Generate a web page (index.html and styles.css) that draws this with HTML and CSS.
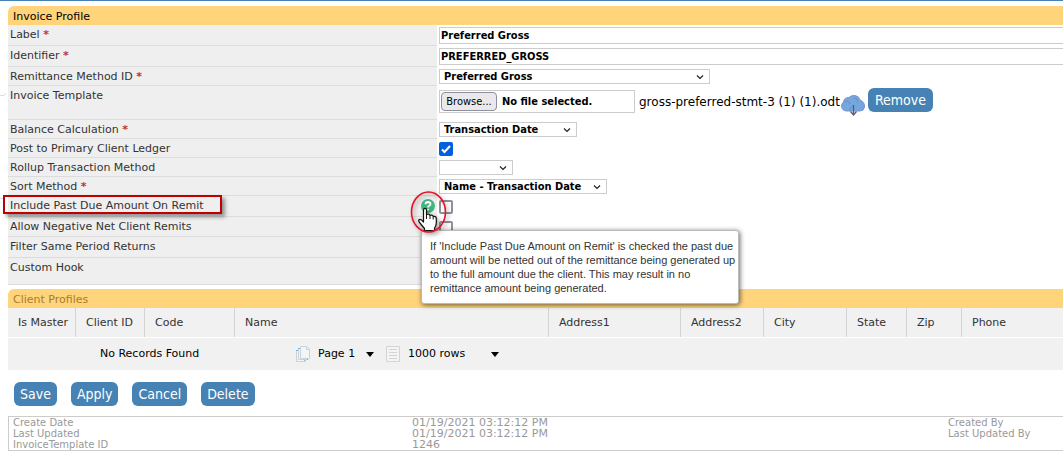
FILE: index.html
```html
<!DOCTYPE html>
<html lang="en">
<head>
<meta charset="utf-8">
<title>Invoice Profile</title>
<link rel="stylesheet" href="styles.css">
</head>
<body>
<div class="page">
  <div class="rail" aria-hidden="true">
    <svg class="rail-curve" width="8" height="6" viewBox="0 0 8 6"><path d="M0 3.5H3Q5 3.5 6 1" fill="none" stroke="#ddd"/></svg>
    <span class="rail-line"></span>
  </div>
  <main class="content">
    <form class="profile">
      <h2 class="bar">Invoice Profile</h2>
      <div class="row tall">
        <label class="name" for="label">Label <b class="req">*</b></label>
        <div class="field"><input class="text" id="label" type="text" value="Preferred Gross"></div>
      </div>
      <div class="row tall">
        <label class="name" for="ident">Identifier <b class="req">*</b></label>
        <div class="field"><input class="text" id="ident" type="text" value="PREFERRED_GROSS"></div>
      </div>
      <div class="row">
        <label class="name" for="remit">Remittance Method ID <b class="req">*</b></label>
        <div class="field"><select class="pick pick-wide" id="remit"><option>Preferred Gross</option></select></div>
      </div>
      <div class="row template">
        <label class="name" for="browse">Invoice Template</label>
        <div class="field files">
          <div class="file-box"><button class="browse" id="browse" type="button">Browse...</button><span>No file selected.</span></div>
          <span class="file-name">gross-preferred-stmt-3 (1) (1).odt</span>
          <svg class="cloud" width="24" height="21" viewBox="0 0 24 21"><path d="M5 16A5 5 0 0 1 2.500 7Q3 2.500 8 2.500Q10 0 14 .5Q18 1 19 5Q24 7 23.500 12Q23 16 19 16Z" fill="#76a7dc" stroke="#7f93cc"/><path d="M4 7Q8 5 9 9M13 3Q17 3 17 7M9 16Q8 13 12 11" fill="none" stroke="#668fcf"/><path d="M12.500 10V20M9.500 16.500L12.500 20L15.500 16.500" fill="none" stroke="#555b7c" stroke-width="1.300"/></svg>
          <button class="action" type="button">Remove</button>
        </div>
      </div>
      <div class="row">
        <label class="name" for="balance">Balance Calculation <b class="req">*</b></label>
        <div class="field"><select class="pick pick-date" id="balance"><option>Transaction Date</option></select></div>
      </div>
      <div class="row">
        <label class="name" for="post">Post to Primary Client Ledger</label>
        <div class="field"><input class="tick" id="post" type="checkbox" checked></div>
      </div>
      <div class="row">
        <label class="name" for="rollup">Rollup Transaction Method</label>
        <div class="field"><select class="pick pick-small" id="rollup"><option></option></select></div>
      </div>
      <div class="row">
        <label class="name" for="sort">Sort Method <b class="req">*</b></label>
        <div class="field"><select class="pick pick-sort" id="sort"><option>Name - Transaction Date</option></select></div>
      </div>
      <div class="row tall marked">
        <div class="name help-cell"><label for="past">Include Past Due Amount On Remit</label>
          <svg class="help" width="14" height="14" viewBox="0 0 14 14"><circle cx="7" cy="7" r="7" fill="#43b581"/><path d="M4.500 5.300Q4.600 3 7.100 3Q9.600 3.200 9.500 5.200Q9.300 6.500 7.900 7Q7.100 7.300 7.100 8.500M7.100 9.800V11.500" fill="none" stroke="#fff" stroke-width="1.800"/></svg>
        </div>
        <div class="field"><input class="tick" id="past" type="checkbox"></div>
        <span class="outline"></span>
        <svg class="pointer" width="44" height="52" viewBox="0 0 44 52">
          <g fill="#fff" stroke="#111" stroke-linejoin="round"><path stroke-width="1.200" d="M15.500 34V22Q15.600 20.300 17 20.300Q18.500 20.300 18.500 22V26.500Q21.500 25.500 22 27.500Q24.700 26.500 25.200 28.500Q28.300 27.800 28.300 31V35Q28 38 26.500 40V42.500H16.500V40.500L11.500 34.500Q10 32.500 11.300 31.500Q13 31 15.500 34Z"/><path fill="none" d="M18.500 26.500V31M22 27.500V31M25.200 28.500V31.500"/></g>
          <ellipse cx="20.500" cy="24" rx="17" ry="20" fill="none" stroke="#e81224" stroke-width="1.600"/>
        </svg>
        <div class="tip" role="tooltip">If 'Include Past Due Amount on Remit' is checked the past due<br>amount will be netted out of the remittance being generated up<br>to the full amount due the client. This may result in no<br>remittance amount being generated.</div>
      </div>
      <div class="row mid">
        <label class="name" for="neg">Allow Negative Net Client Remits</label>
        <div class="field"><input class="tick" id="neg" type="checkbox"></div>
      </div>
      <div class="row tall"><div class="name">Filter Same Period Returns</div></div>
      <div class="row hook"><div class="name">Custom Hook</div></div>
    </form>

    <section class="clients">
      <h2 class="bar bar-muted">Client Profiles</h2>
      <table class="grid">
        <colgroup><col class="c-master"><col class="c-id"><col class="c-code"><col class="c-name"><col class="c-addr1"><col class="c-addr2"><col class="c-city"><col class="c-state"><col class="c-zip"><col></colgroup>
        <thead><tr><th>Is Master</th><th>Client ID</th><th>Code</th><th>Name</th><th>Address1</th><th>Address2</th><th>City</th><th>State</th><th>Zip</th><th>Phone</th></tr></thead>
      </table>
      <div class="pager">
        <span class="none">No Records Found</span>
        <svg width="14" height="16" viewBox="0 0 14 16"><g fill="#f4f4f4" stroke="#c9d3d9"><path d="M.5 4.500H8.500V15.500H.5Z"/><path d="M2.500 2.500H10.500V13.500H2.500Z"/><path d="M4.500 .5H10.500L13.500 3.500V12.500H4.500ZM10.500 .5V3.500H13.500"/></g><path d="M.5 5V4.500H2M2.500 3V2.500H4M9 15.500V14M11 13.500H12" stroke="#5db4e6" fill="none"/></svg>
        <select class="flat flat-page" aria-label="Page"><option>Page 1</option></select>
        <svg width="14" height="16" viewBox="0 0 14 16"><path d="M.5 .5H13.500V15.500H.5Z" fill="#f4f4f4" stroke="#d2d5d7"/><path d="M3 3.500H11M3 6.500H11M3 9.500H11M3 12.500H11" stroke="#d2d5d7"/></svg>
        <select class="flat flat-rows" aria-label="Rows per page"><option>1000 rows</option></select>
      </div>
    </section>

    <div class="actions">
      <button class="action" type="button">Save</button>
      <button class="action" type="button">Apply</button>
      <button class="action" type="button">Cancel</button>
      <button class="action" type="button">Delete</button>
    </div>

    <footer class="audit">
      <span>Create Date</span><span class="value">01/19/2021 03:12:12 PM</span><span>Created By</span>
      <span>Last Updated</span><span class="value">01/19/2021 03:12:12 PM</span><span>Last Updated By</span>
      <span>InvoiceTemplate ID</span><span class="value">1246</span><span></span>
    </footer>
  </main>
</div>
</body>
</html>
```
FILE: styles.css
```css
* { box-sizing: border-box; }
body {
  margin: 0;
  background: #fff;
  color: #000;
  font: 11px/14px Verdana, "DejaVu Sans", sans-serif;
  overflow-x: hidden;
}
button, input, select { font: inherit; margin: 0; }
.page {
  display: flex;
  border-top: 1px solid #4682b4;
}
.rail { flex: 0 0 8px; padding-top: 91px; }
.rail-curve { display: block; }
.rail-line {
  display: block;
  width: 4px;
  height: 1px;
  margin-top: 100px;
  background: #ddd;
}
.content { flex: 1; min-width: 0; padding-top: 5px; }
.bar {
  margin: 0;
  height: 19px;
  padding: 4px 5px 0;
  border-radius: 6px 0 0 0;
  background: #ffd47b;
  font-size: 11px;
  font-weight: normal;
  line-height: 14px;
}
.bar-muted { color: #a87c2c; }

.row {
  display: grid;
  grid-template-columns: 429px minmax(0, 1fr);
  column-gap: 2px;
  min-height: 19px;
}
.tall { min-height: 21px; }
.mid { min-height: 20px; }
.template { min-height: 34px; }
.hook { min-height: 27px; }
.name {
  padding: 3px 2px 0;
  border-bottom: 1px solid #dcdcdc;
  background: #efefef;
  color: #333;
}
.req { color: #c0323a; }
.field { display: flex; align-items: flex-start; padding-top: 2px; }
.text {
  width: 100%;
  height: 17px;
  padding: 0 1px;
  border: 1px solid #ccc;
  border-right: 0;
  font-family: Tahoma, "DejaVu Sans Condensed", "Noto Sans", sans-serif;
  font-weight: bold;
}
.pick {
  appearance: none;
  height: 15px;
  padding: 0 4px;
  border: 1px solid #ccc;
  border-radius: 0;
  color: #000;
  background: #fff url("data:image/svg+xml,%3Csvg xmlns='http://www.w3.org/2000/svg' width='8' height='6'%3E%3Cpath d='M1 1.500L4 4.500L7 1.500' fill='none' stroke='%23222' stroke-width='1.200'/%3E%3C/svg%3E") no-repeat right 5px center;
  font-family: Tahoma, "DejaVu Sans Condensed", "Noto Sans", sans-serif;
  font-weight: bold;
  line-height: 13px;
}
.pick-wide { width: 271px; }
.pick-date { width: 138px; }
.pick-small { width: 74px; }
.pick-sort { width: 168px; }
.file-box {
  display: flex;
  align-items: center;
  gap: 5px;
  width: 196px;
  height: 23px;
  margin-top: 2px;
  padding: 1px;
  border: 1px solid #ccc;
  font-family: Tahoma, "DejaVu Sans Condensed", "Noto Sans", sans-serif;
  font-weight: bold;
}
.browse {
  width: 56px;
  height: 19px;
  padding: 0;
  border: 1px solid #8f8f9d;
  border-radius: 4px;
  background: #e9e9ed;
  font-weight: normal;
}
.file-name { margin: 7px 1px 0 4px; font-size: 12px; }
.cloud { margin-top: 7px; margin-right: 3px; }
.action {
  height: 24px;
  padding: 0 7px;
  border: 0;
  border-radius: 6px;
  background: #4682b4;
  color: #fff;
  font-family: Tahoma, "DejaVu Sans Condensed", "Noto Sans", sans-serif;
  font-size: 14px;
  line-height: 24px;
}
.tick {
  appearance: none;
  width: 14px;
  height: 14px;
  margin-top: 1px;
  border: 2px solid #8f8f9d;
  border-radius: 2px;
  background: #fff;
}
.tall .tick, .mid .tick { margin-top: 2px; }
.tick:checked {
  border: 0;
  background: #0060df url("data:image/svg+xml,%3Csvg xmlns='http://www.w3.org/2000/svg' width='14' height='14'%3E%3Cpath d='M3 7.500L5.500 10L11 4' fill='none' stroke='white' stroke-width='2'/%3E%3C/svg%3E");
}
.marked { position: relative; }
.help-cell { display: flex; justify-content: space-between; }
.outline {
  position: absolute;
  left: -5px;
  top: -1px;
  width: 219px;
  height: 19px;
  border: 2px solid #c00000;
  box-shadow: 3px 3px 4px rgba(0, 0, 0, .4);
}
.pointer {
  position: absolute;
  left: 400px;
  top: -8px;
  z-index: 4;
  filter: drop-shadow(2px 2px 2px rgba(0, 0, 0, .35));
}
.tip {
  position: absolute;
  left: 413px;
  top: 34px;
  z-index: 3;
  width: 318px;
  padding: 8px 8px 8px;
  border: 1px solid #bbb;
  border-radius: 3px;
  background: #fff;
  color: #333;
  box-shadow: 1px 1px 5px rgba(0, 0, 0, .6);
  font-family: Arial, "Liberation Sans", sans-serif;
  white-space: nowrap;
}

.clients { margin-top: 4px; }
.grid {
  width: 100%;
  border-collapse: separate;
  border-spacing: 0;
  table-layout: fixed;
}
.grid th {
  height: 29px;
  padding: 0 0 0 10px;
  border-right: 1px solid #d4d4d4;
  background: #f1f1f1;
  color: #333;
  font-weight: normal;
  text-align: left;
  white-space: nowrap;
}
.grid th:last-child { border-right: 0; }
.c-master { width: 68px; }
.c-id { width: 69px; }
.c-code { width: 90px; }
.c-name { width: 314px; }
.c-addr1 { width: 132px; }
.c-addr2, .c-city { width: 83px; }
.c-state { width: 60px; }
.c-zip { width: 55px; }
.pager {
  display: flex;
  align-items: center;
  height: 32px;
  margin-top: 1px;
  padding-left: 92px;
  background: #f1f1f1;
}
.none { width: 196px; }
.flat {
  appearance: none;
  margin-left: 8px;
  padding: 0;
  border: 0;
  color: #000;
  background: url("data:image/svg+xml,%3Csvg xmlns='http://www.w3.org/2000/svg' width='8' height='5'%3E%3Cpath d='M0 0H8L4 5Z'/%3E%3C/svg%3E") no-repeat right center;
}
.flat-page { width: 56px; margin-right: 12px; }
.flat-rows { width: 91px; }

.actions { display: flex; gap: 14px; padding: 12px 6px 10px; }
.actions .action { padding: 0 6px; }
.audit {
  display: grid;
  grid-template-columns: 399px minmax(0, 536px) 1fr;
  padding: 0 4px;
  border: 1px solid #ccc;
  border-right: 0;
  color: #999;
  font-size: 10px;
  line-height: 11px;
  white-space: nowrap;
}
.value { font-size: 11px; }
```
